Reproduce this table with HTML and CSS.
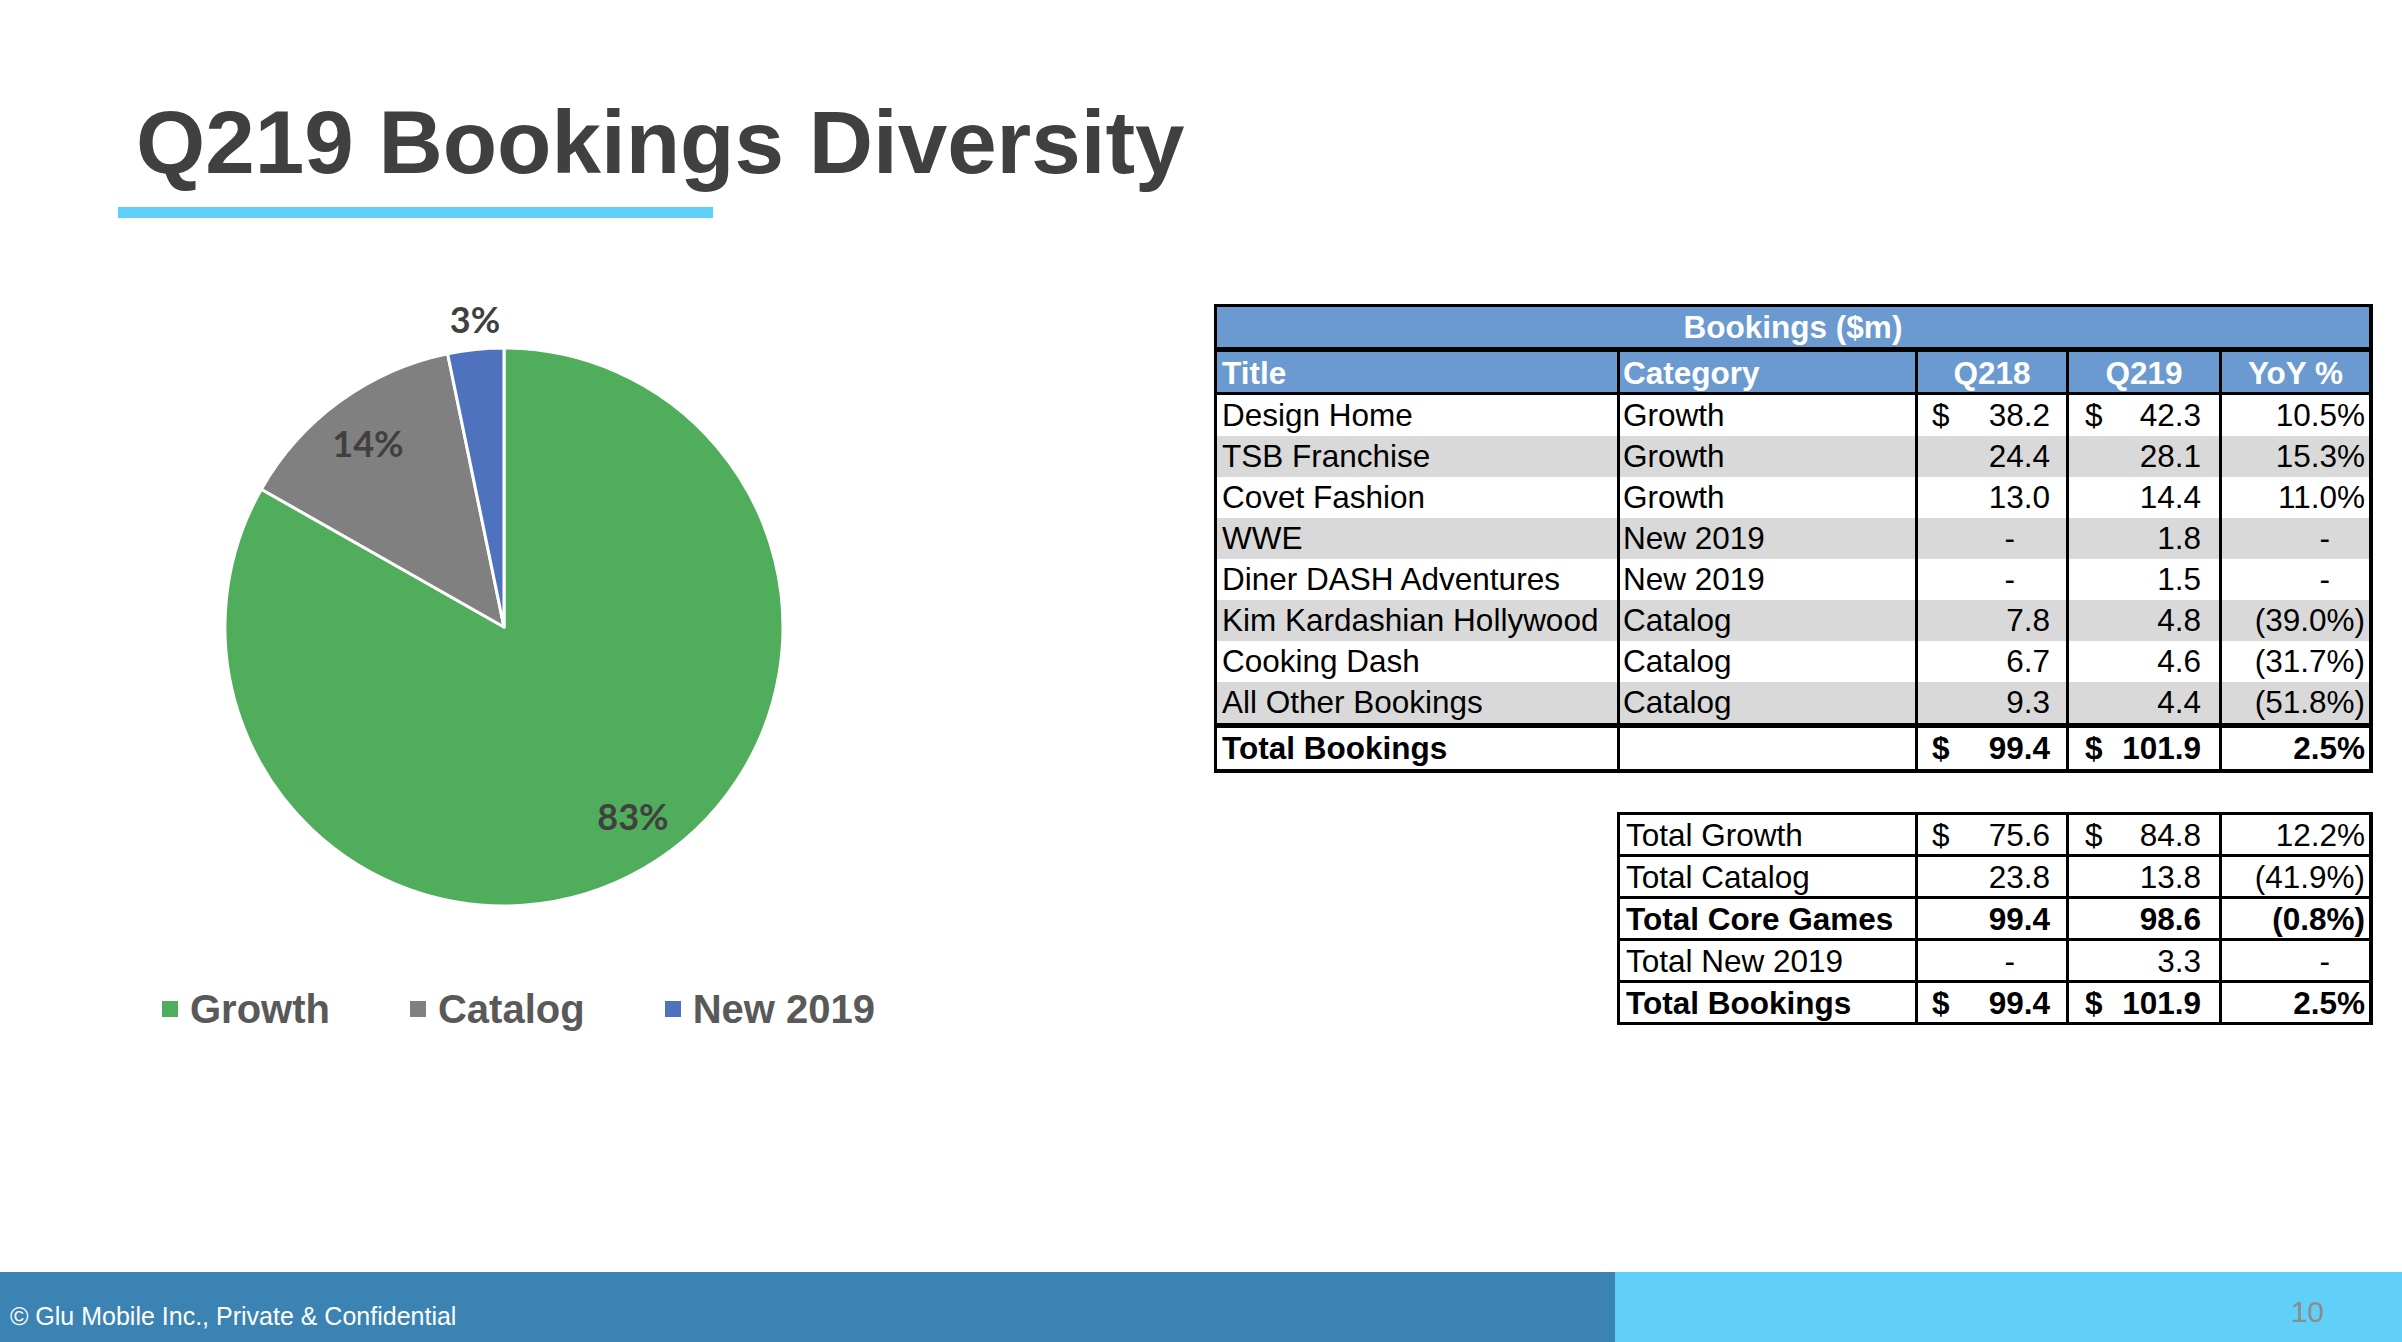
FILE: index.html
```html
<!DOCTYPE html>
<html lang="en">
<head>
<meta charset="utf-8">
<title>Q219 Bookings Diversity</title>
<link rel="stylesheet" href="styles.css">
</head>
<body>
<div class="slide">
  <header class="head">
    <h1 class="title">Q219 Bookings Diversity</h1>
    <div class="rule"></div>
  </header>

  <main class="content">
    <section class="chart">
      <svg class="pie" width="720" height="660" viewBox="0 0 720 660">
        <path class="slice growth" d="M354,347 L354,68 A279,279 0 1 1 111.33,209.26 Z"/>
        <path class="slice catalog" d="M354,347 L111.33,209.26 A279,279 0 0 1 297.63,73.75 Z"/>
        <path class="slice new" d="M354,347 L297.63,73.75 A279,279 0 0 1 354,68 Z"/>
        <text class="plabel" x="325" y="53">3%</text>
        <text class="plabel" x="218" y="177">14%</text>
        <text class="plabel" x="483" y="550">83%</text>
      </svg>
      <div class="legend">
        <div class="lg-item"><span class="sw sw-growth"></span>Growth</div>
        <div class="lg-item"><span class="sw sw-catalog"></span>Catalog</div>
        <div class="lg-item"><span class="sw sw-new"></span>New 2019</div>
      </div>
    </section>

    <section class="tables">
      <div class="grid t1">
        <div class="banner">Bookings ($m)</div>

        <div class="row hdr">
          <div class="c ttl">Title</div>
          <div class="c cat bl">Category</div>
          <div class="c ctr bl">Q218</div>
          <div class="c ctr bl">Q219</div>
          <div class="c ctr bl">YoY %</div>
        </div>

        <div class="row">
          <div class="c ttl">Design Home</div>
          <div class="c cat bl">Growth</div>
          <div class="c num q18 bl"><span class="cur">$</span><span>38.2</span></div>
          <div class="c num q19 bl"><span class="cur">$</span><span>42.3</span></div>
          <div class="c pct bl">10.5%</div>
        </div>
        <div class="row alt">
          <div class="c ttl">TSB Franchise</div>
          <div class="c cat bl">Growth</div>
          <div class="c num q18 bl"><span>24.4</span></div>
          <div class="c num q19 bl"><span>28.1</span></div>
          <div class="c pct bl">15.3%</div>
        </div>
        <div class="row">
          <div class="c ttl">Covet Fashion</div>
          <div class="c cat bl">Growth</div>
          <div class="c num q18 bl"><span>13.0</span></div>
          <div class="c num q19 bl"><span>14.4</span></div>
          <div class="c pct bl">11.0%</div>
        </div>
        <div class="row alt">
          <div class="c ttl">WWE</div>
          <div class="c cat bl">New 2019</div>
          <div class="c num q18 dash bl"><span>-</span></div>
          <div class="c num q19 bl"><span>1.8</span></div>
          <div class="c pct pdash bl">-</div>
        </div>
        <div class="row">
          <div class="c ttl">Diner DASH Adventures</div>
          <div class="c cat bl">New 2019</div>
          <div class="c num q18 dash bl"><span>-</span></div>
          <div class="c num q19 bl"><span>1.5</span></div>
          <div class="c pct pdash bl">-</div>
        </div>
        <div class="row alt">
          <div class="c ttl">Kim Kardashian Hollywood</div>
          <div class="c cat bl">Catalog</div>
          <div class="c num q18 bl"><span>7.8</span></div>
          <div class="c num q19 bl"><span>4.8</span></div>
          <div class="c pct bl">(39.0%)</div>
        </div>
        <div class="row">
          <div class="c ttl">Cooking Dash</div>
          <div class="c cat bl">Catalog</div>
          <div class="c num q18 bl"><span>6.7</span></div>
          <div class="c num q19 bl"><span>4.6</span></div>
          <div class="c pct bl">(31.7%)</div>
        </div>
        <div class="row alt last">
          <div class="c ttl">All Other Bookings</div>
          <div class="c cat bl">Catalog</div>
          <div class="c num q18 bl"><span>9.3</span></div>
          <div class="c num q19 bl"><span>4.4</span></div>
          <div class="c pct bl">(51.8%)</div>
        </div>
        <div class="row bold">
          <div class="c ttl">Total Bookings</div>
          <div class="c cat bl"></div>
          <div class="c num q18 bl"><span class="cur">$</span><span>99.4</span></div>
          <div class="c num q19 bl"><span class="cur">$</span><span>101.9</span></div>
          <div class="c pct bl">2.5%</div>
        </div>
      </div>

      <div class="grid t2">
        <div class="row">
          <div class="c first">Total Growth</div>
          <div class="c num q18 bl"><span class="cur">$</span><span>75.6</span></div>
          <div class="c num q19 bl"><span class="cur">$</span><span>84.8</span></div>
          <div class="c pct bl">12.2%</div>
        </div>
        <div class="row">
          <div class="c first">Total Catalog</div>
          <div class="c num q18 bl"><span>23.8</span></div>
          <div class="c num q19 bl"><span>13.8</span></div>
          <div class="c pct bl">(41.9%)</div>
        </div>
        <div class="row bold">
          <div class="c first">Total Core Games</div>
          <div class="c num q18 bl"><span>99.4</span></div>
          <div class="c num q19 bl"><span>98.6</span></div>
          <div class="c pct bl">(0.8%)</div>
        </div>
        <div class="row">
          <div class="c first">Total New 2019</div>
          <div class="c num q18 dash bl"><span>-</span></div>
          <div class="c num q19 bl"><span>3.3</span></div>
          <div class="c pct pdash bl">-</div>
        </div>
        <div class="row bold final">
          <div class="c first">Total Bookings</div>
          <div class="c num q18 bl"><span class="cur">$</span><span>99.4</span></div>
          <div class="c num q19 bl"><span class="cur">$</span><span>101.9</span></div>
          <div class="c pct bl">2.5%</div>
        </div>
      </div>
    </section>
  </main>

  <footer class="foot">
    <div class="foot-left">© Glu Mobile Inc., Private &amp; Confidential</div>
    <div class="foot-right"><span class="pageno">10</span></div>
  </footer>
</div>
</body>
</html>
```

FILE: styles.css
```css
* { box-sizing: border-box; }

html, body {
  margin: 0;
  padding: 0;
  background: #ffffff;
}

body {
  font-family: "Liberation Sans", Arial, sans-serif;
  color: #000;
}

.slide {
  width: 2402px;
  height: 1342px;
  overflow: hidden;
  display: flex;
  flex-direction: column;
  background: #fff;
}

/* ---------- heading ---------- */
.head {
  padding-top: 98px;
}

.title {
  margin: 0 0 0 136px;
  font-family: "Liberation Sans", Arial, sans-serif;
  font-weight: 700;
  font-size: 89px;
  line-height: 89px;
  color: #404040;
  white-space: nowrap;
}

.rule {
  margin: 20px 0 0 118px;
  width: 595px;
  height: 11px;
  background: #61d0f8;
}

/* ---------- content ---------- */
.content {
  display: flex;
  align-items: flex-start;
  margin-top: 62px;
}

.chart {
  width: 1214px;
  flex: none;
}

.pie {
  display: block;
  margin-left: 150px;
}

.slice {
  stroke: #ffffff;
  stroke-width: 3;
  stroke-linejoin: round;
}
.growth { fill: #4fad5b; }
.catalog { fill: #808080; }
.new { fill: #4f72bf; }

.plabel {
  font-family: Lato, "Open Sans", sans-serif;
  font-weight: 700;
  font-size: 36px;
  fill: #404040;
  text-anchor: middle;
}

.legend {
  display: flex;
  align-items: center;
  gap: 80px;
  margin: 49px 0 0 162px;
  height: 40px;
}

.lg-item {
  display: flex;
  align-items: center;
  gap: 12px;
  font-family: "Liberation Sans", Arial, sans-serif;
  font-weight: 700;
  font-size: 40px;
  line-height: 40px;
  color: #595959;
  white-space: nowrap;
}

.sw {
  width: 16px;
  height: 16px;
  flex: none;
}
.sw-growth { background: #4fad5b; }
.sw-catalog { background: #808080; }
.sw-new { background: #4f72bf; }

/* ---------- tables ---------- */
.tables {
  padding-top: 24px;
  display: flex;
  flex-direction: column;
  align-items: flex-start;
}

.grid {
  display: grid;
  border: 3px solid #000;
  border-right-width: 4px;
  border-bottom-width: 4px;
  font-size: 31.5px;
  background: #fff;
}

.t1 {
  grid-template-columns: 400px 298px 151px 153px 150px;
}

.t2 {
  margin: 39px 0 0 403px;
  grid-template-columns: 295px 151px 153px 150px;
  border-bottom-width: 3px;
}

.row { display: contents; }

.banner {
  grid-column: 1 / -1;
  height: 45px;
  line-height: 40px;
  border-bottom: 5px solid #000;
  background: #6a9ad0;
  color: #fff;
  font-weight: 700;
  text-align: center;
}

.c {
  height: 41px;
  line-height: 41px;
  white-space: nowrap;
  overflow: hidden;
  background: #fff;
}

.bl { border-left: 3px solid #000; }

.row.alt > .c { background: #d9d9d9; }

.row.hdr > .c {
  height: 43px;
  line-height: 40px;
  padding-top: 1px;
  border-bottom: 3px solid #000;
  background: #6a9ad0;
  color: #fff;
  font-weight: 700;
}

.row.last > .c {
  height: 46px;
  border-bottom: 5px solid #000;
}

.row.bold > .c { font-weight: 700; }

.ttl { padding-left: 5px; }
.cat { padding-left: 3px; }
.ctr { text-align: center; }
.first { padding-left: 6px; }

.num {
  display: flex;
  justify-content: flex-end;
}
.num .cur { margin-right: auto; }
.q18 { padding: 0 16px 0 14px; }
.q19 { padding: 0 18px 0 16px; }
.q18.dash { padding-right: 51px; }

.pct {
  text-align: right;
  padding-right: 4px;
}
.pct.pdash { padding-right: 39px; }

/* second table: all grid lines */
.t2 .c {
  height: 42px;
  line-height: 37px;
  padding-top: 2px;
  border-bottom: 3px solid #000;
}
.t2 .row.final > .c {
  height: 39px;
  border-bottom: 0;
}

/* ---------- footer ---------- */
.foot {
  margin-top: auto;
  height: 70px;
  display: flex;
  flex: none;
}

.foot-left {
  width: 1615px;
  flex: none;
  background: #3b83b3;
  color: #fff;
  font-size: 25px;
  line-height: 25px;
  padding: 32px 0 0 10px;
  white-space: nowrap;
}

.foot-right {
  flex: 1;
  background: #61d0f9;
  display: flex;
  justify-content: flex-end;
  padding: 25px 78px 0 0;
}

.pageno {
  font-size: 30px;
  line-height: 30px;
  color: #8c8c8c;
}
```
